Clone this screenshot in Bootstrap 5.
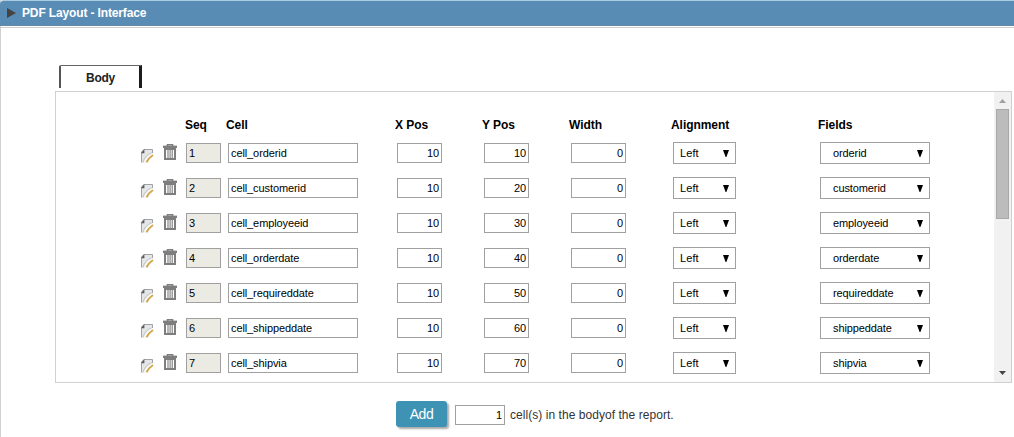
<!DOCTYPE html>
<html lang="en">
<head>
<meta charset="utf-8">
<meta name="viewport" content="width=device-width, initial-scale=1">
<title>PDF Layout - Interface</title>
<link href="https://cdn.jsdelivr.net/npm/bootstrap@5.3.0/dist/css/bootstrap.min.css" rel="stylesheet">
<style>
body{font-family:"Liberation Sans",Arial,sans-serif;font-size:12px;line-height:14px;color:#222;background:#fff;height:437px;overflow:hidden}
.block-frame{height:437px;border-left:1px solid #d0d0d0}
.title-bar{height:26px;background:#588cb5;border-top:1px solid #a9cde0;border-bottom:1px solid #6688a4;border-top-left-radius:4px;margin-left:-1px;padding-left:7px;color:#fff;font-weight:bold}
.title-bar span{margin-left:6px;letter-spacing:-.14px}
.title-rule{height:1px;margin-top:1px;background:#cbcfd2}
.tab-body{width:83px;height:23px;margin:37px 0 0 58px;border-left:2px solid #555;border-top:1px solid #666;border-right:3px solid #1c1c1c;border-top-left-radius:2px;font-weight:bold;padding-top:1px;padding-left:1px;letter-spacing:-.3px}
.cell-panel{width:957px;height:292px;margin:3px 0 0 54px;border:1px solid #d0d0d0}
.cell-list{padding-left:85px;overflow:hidden}
.cell-row{display:grid;grid-template-columns:22px 23px 42px 169px 87px 87px 102px 147px 110px;height:35px;padding-top:7px;align-items:start}
.cell-head{height:43px;padding-top:26px;font-weight:bold;color:#000;letter-spacing:-.05px}
.cell-head span{margin-left:-2px}
.box{height:20px;margin-top:1px;border:1px solid #a0a0a0;border-radius:0;padding:0 2px;font-size:11px;letter-spacing:-.1px;line-height:18px;color:#000;min-height:0;background:#fff}
.box-seq{width:35px;background:#ebebe4}
.box-name{width:130px}
.box-pos{width:45px}
.box-width{width:55px}
.box-count{width:50px}
.pick{position:relative;height:22px}
.pick-align{width:63px}
.pick-field{width:110px}
.pick select{appearance:none;width:100%;height:22px;border:1px solid #a0a0a0;border-radius:0;background:#fff;font-size:11px;line-height:20px;padding:0 20px 0 6px;color:#000;display:block;letter-spacing:.08px}
.pick-field select{padding-left:12px;letter-spacing:-.1px}
.pick svg{position:absolute;right:7px;top:8px;pointer-events:none}
.ic-edit{margin-top:7px}
.ic-trash{margin-top:2px}
.scroll-track{width:17px;background:#f1f1f1}
.scroll-thumb{width:13px;height:110px;background:#bcbcbc;border:1px solid #a8a8a8}
.add-bar{margin:18px 0 0 395px}
.btn-add{width:51px;height:26px;padding:0;border:0;border-radius:3px;background:#3e92b4;color:#fff;font-size:14px;letter-spacing:-.5px;line-height:26px;box-shadow:2px 2px 2px #aaa}
.btn-add:hover{background:#3e92b4;color:#fff}
.add-note{color:#333;margin:7px 0 0 5px;letter-spacing:.05px}
</style>
</head>
<body>
<div class="block-frame">
  <header class="title-bar d-flex align-items-center">
    <svg width="9" height="10" viewBox="0 0 9 10"><path d="M0 0L9 5L0 10Z" fill="#444"/></svg>
    <span>PDF Layout - Interface</span>
  </header>
  <div class="title-rule"></div>
  <div class="tab-body d-flex align-items-center justify-content-center">Body</div>
  <section class="cell-panel d-flex">
    <div class="cell-list flex-grow-1" id="cells">
      <div class="cell-row cell-head">
        <i></i><i></i><span style="margin-left:-1px">Seq</span><span>Cell</span><span>X Pos</span><span>Y Pos</span><span>Width</span><span>Alignment</span><span>Fields</span>
      </div>
    </div>
    <div class="scroll-track d-flex flex-column align-items-center">
      <svg width="7" height="4" viewBox="0 0 7 4" style="margin:7px 0 6px"><path d="M0 4L3.5 0L7 4Z" fill="#a0a0a0"/></svg>
      <div class="scroll-thumb"></div>
      <svg class="mt-auto" width="7" height="4" viewBox="0 0 7 4" style="margin-bottom:7px"><path d="M0 0L3.5 4L7 0Z" fill="#444"/></svg>
    </div>
  </section>
  <div class="add-bar d-flex align-items-start">
    <button class="btn btn-add" type="button">Add</button>
    <input class="box box-count text-end" style="margin:4px 0 0 8px" value="1" aria-label="Number of cells">
    <span class="add-note">cell(s) in the bodyof the report.</span>
  </div>
</div>
<script src="https://cdn.jsdelivr.net/npm/bootstrap@5.3.0/dist/js/bootstrap.bundle.min.js"></script>
<script>
const fields = ['orderid', 'customerid', 'employeeid', 'orderdate', 'requireddate', 'shippeddate', 'shipvia'];
const editIcon = `<svg class="ic-edit" width="13" height="14" viewBox="0 0 13 14" fill="none">
  <path d="M2.5 .5H11.5V7L6 13.5H.5V3Z" fill="#e4e6e8"/>
  <path d="M.5 13.5V3L2.8 .5H11.5V4" stroke="#a0a3a6"/><path d="M0 4.2L3.4 0V4.2Z" fill="#55585c"/>
  <path d="M1.8 13.5C3 9 6 5.6 10.5 3.8" stroke="#c0c2c4"/><path d="M3.8 13.5C5 9.5 8 6.5 12 5" stroke="#fff" stroke-width="1.5"/>
  <path d="M5.5 13.3C7 10.2 9 8 12 6" stroke="#d3aa50" stroke-width="2"/></svg>`;
const trashIcon = `<svg class="ic-trash" width="14" height="16" viewBox="0 0 14 16" fill="none" stroke="#7e7e7e">
  <path d="M4.5 2V.8H9.5V2" stroke-width="1.6"/><path d="M0 2.8H14" stroke-width="2.4"/>
  <path d="M2 5V15H12V5Z" stroke-width="2"/><path d="M5 5V15M7.1 5V15M9.2 5V15" stroke-width="1.1"/></svg>`;
const arrow = '<svg width="6" height="7" viewBox="0 0 6 7"><path d="M0 0H6L3.4 7H2.6Z" fill="#000"/></svg>';
const box = (kind, value, label) => `<input class="box ${kind}" value="${value}" aria-label="${label}">`;
const pick = (kind, value, label) => `<div class="pick ${kind}"><select aria-label="${label}"><option>${value}</option></select>${arrow}</div>`;
document.getElementById('cells').insertAdjacentHTML('beforeend', fields.map((f, i) => `<div class="cell-row">
  ${editIcon}${trashIcon}${box('box-seq', i + 1, 'Seq')}${box('box-name', 'cell_' + f, 'Cell')}
  ${box('box-pos text-end', 10, 'X Pos')}${box('box-pos text-end', (i + 1) * 10, 'Y Pos')}${box('box-width text-end', 0, 'Width')}
  ${pick('pick-align', 'Left', 'Alignment')}${pick('pick-field', f, 'Fields')}</div>`).join(''));
</script>
</body>
</html>
